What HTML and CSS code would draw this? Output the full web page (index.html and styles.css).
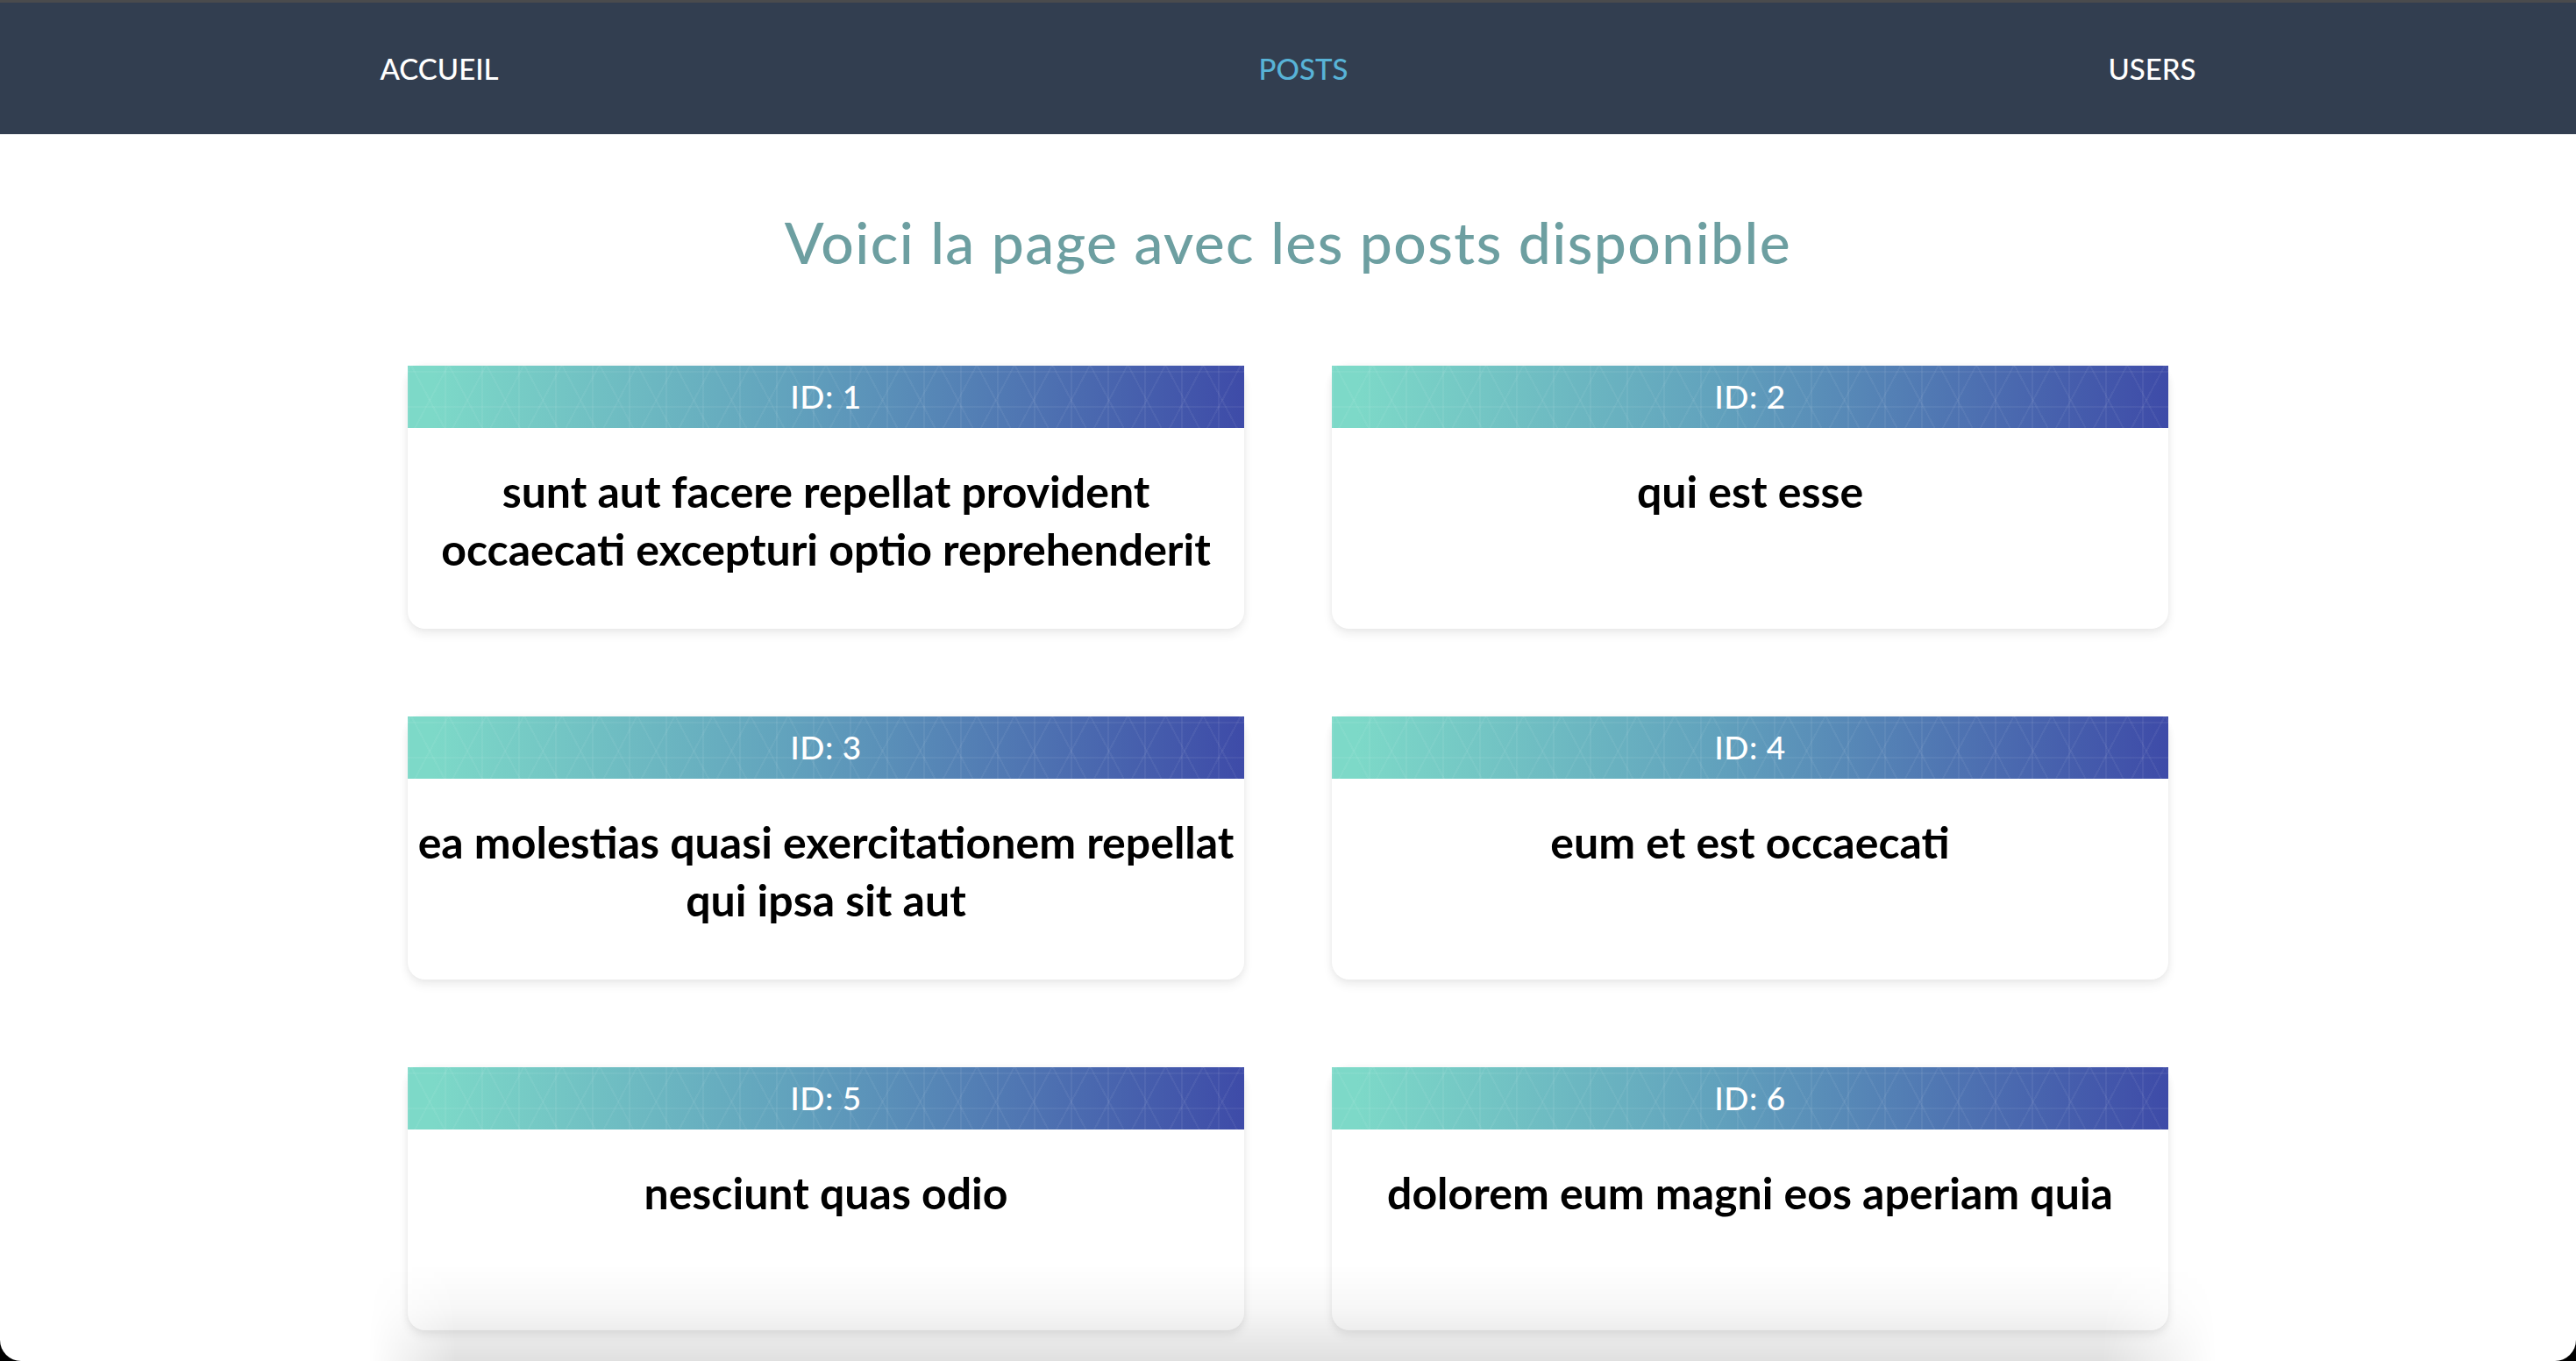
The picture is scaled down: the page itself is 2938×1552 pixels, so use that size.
FILE: index.html
```html
<!DOCTYPE html>
<html lang="fr">
<head>
<meta charset="utf-8">
<title>Posts</title>
<link rel="stylesheet" href="styles.css">
</head>
<body>
<nav class="topnav">
  <a class="nav-link" href="#">Accueil</a>
  <a class="nav-link nav-link--active" href="#">Posts</a>
  <a class="nav-link" href="#">Users</a>
</nav>
<main class="page">
  <h1 class="page-title">Voici la page avec les posts disponible</h1>
  <section class="post-grid">
    <article class="post-card">
      <header class="post-card__head">ID: 1</header>
      <h2 class="post-card__title">sunt aut facere repellat provident occaecati excepturi optio reprehenderit</h2>
    </article>
    <article class="post-card">
      <header class="post-card__head">ID: 2</header>
      <h2 class="post-card__title">qui est esse</h2>
    </article>
    <article class="post-card">
      <header class="post-card__head">ID: 3</header>
      <h2 class="post-card__title">ea molestias quasi exercitationem repellat qui ipsa sit aut</h2>
    </article>
    <article class="post-card">
      <header class="post-card__head">ID: 4</header>
      <h2 class="post-card__title">eum et est occaecati</h2>
    </article>
    <article class="post-card">
      <header class="post-card__head">ID: 5</header>
      <h2 class="post-card__title">nesciunt quas odio</h2>
    </article>
    <article class="post-card">
      <header class="post-card__head">ID: 6</header>
      <h2 class="post-card__title">dolorem eum magni eos aperiam quia</h2>
    </article>
  </section>
</main>
<div class="bottom-fade"></div>
<div class="window-frame"></div>
</body>
</html>
```

FILE: styles.css
```css
html {
  scrollbar-width: none;
}
html::-webkit-scrollbar {
  display: none;
}
body {
  margin: 0;
  background: #ffffff;
  font-family: "Lato", "Noto Sans", sans-serif;
  color: #000;
}

.topnav {
  height: 150px;
  border-top: 3px solid #4a4b4d;
  background: #323e50;
  display: flex;
  justify-content: space-around;
  align-items: center;
}
.nav-link {
  color: #ffffff;
  text-decoration: none;
  text-transform: uppercase;
  font-size: 33px;
  font-weight: 500;
}
.nav-link--active {
  color: #58b3d7;
}

.page {
  padding-bottom: 20px;
}
.page-title {
  margin: 83px 0 0;
  text-align: center;
  font-size: 66px;
  line-height: 1.2;
  letter-spacing: 1.4px;
  font-weight: 500;
  color: #6d9fa1;
}

.post-grid {
  width: 2008px;
  margin: 102px auto 0;
  display: grid;
  grid-template-columns: 954px 954px;
  column-gap: 100px;
  row-gap: 100px;
}
.post-card {
  height: 300px;
  background: #fff;
  border-radius: 20px;
  box-shadow: 0 6px 12px rgba(0, 0, 0, 0.07), 0 0 8px rgba(0, 0, 0, 0.05);
}
.post-card__head {
  height: 71px;
  box-sizing: border-box;
  padding-bottom: 3px;
  display: flex;
  align-items: center;
  justify-content: center;
  color: #fff;
  font-size: 37px;
  letter-spacing: 0.5px;
  font-weight: 500;
  background:
    repeating-linear-gradient(90deg, rgba(255,255,255,0.06) 0 2px, transparent 2px 42px),
    repeating-linear-gradient(180deg, transparent 0 6px, rgba(255,255,255,0.05) 6px 8px, transparent 8px 40px),
    repeating-linear-gradient(62deg, transparent 0 36px, rgba(255,255,255,0.05) 36px 38px),
    repeating-linear-gradient(-62deg, transparent 0 36px, rgba(255,255,255,0.05) 36px 38px),
    linear-gradient(90deg, #7dd9c8 3%, #62a3bd 45%, #3e4ba8 100%);
}
.post-card__title {
  margin: 39px 0 0;
  text-align: center;
  font-size: 50px;
  line-height: 66px;
  font-weight: 700;
}

.bottom-fade {
  position: fixed;
  left: 420px;
  right: 410px;
  bottom: 0;
  height: 110px;
  pointer-events: none;
  background: linear-gradient(180deg, rgba(0,0,0,0) 0%, rgba(0,0,0,0.03) 45%, rgba(0,0,0,0.12) 100%);
  -webkit-mask-image: linear-gradient(90deg, transparent 0, #000 100px, #000 calc(100% - 130px), transparent 100%);
  mask-image: linear-gradient(90deg, transparent 0, #000 100px, #000 calc(100% - 130px), transparent 100%);
}
.window-frame {
  position: fixed;
  inset: 0;
  pointer-events: none;
  border-radius: 0 0 24px 24px;
  box-shadow: 0 0 0 40px #000;
}
```
